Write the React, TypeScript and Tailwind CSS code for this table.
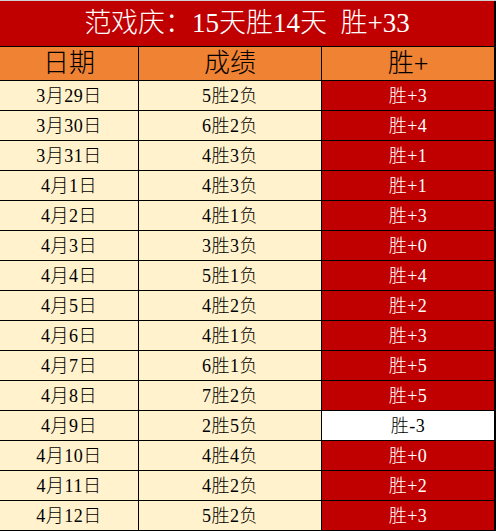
import React from 'react'

type Row = { date: string; record: string; net: string; lost?: boolean }

const rows: Row[] = [
  { date: '3月29日', record: '5胜2负', net: '胜+3' },
  { date: '3月30日', record: '6胜2负', net: '胜+4' },
  { date: '3月31日', record: '4胜3负', net: '胜+1' },
  { date: '4月1日', record: '4胜3负', net: '胜+1' },
  { date: '4月2日', record: '4胜1负', net: '胜+3' },
  { date: '4月3日', record: '3胜3负', net: '胜+0' },
  { date: '4月4日', record: '5胜1负', net: '胜+4' },
  { date: '4月5日', record: '4胜2负', net: '胜+2' },
  { date: '4月6日', record: '4胜1负', net: '胜+3' },
  { date: '4月7日', record: '6胜1负', net: '胜+5' },
  { date: '4月8日', record: '7胜2负', net: '胜+5' },
  { date: '4月9日', record: '2胜5负', net: '胜-3', lost: true },
  { date: '4月10日', record: '4胜4负', net: '胜+0' },
  { date: '4月11日', record: '4胜2负', net: '胜+2' },
  { date: '4月12日', record: '5胜2负', net: '胜+3' },
]

const font = "font-['Liberation_Serif','Noto_Sans_CJK_SC',serif]"

export default function App() {
  return (
    <div className={`w-[496px] h-[531px] bg-white ${font} font-light overflow-hidden`}>
      {/* title */}
      <div className="border-t border-[#d0d0d0]">
        <div className="h-[46px] bg-[#c00000] border-b border-r-2 border-black flex items-center justify-center text-white text-[27px] whitespace-pre">
          范戏庆：15天胜14天  胜+33
        </div>
      </div>

      {/* header */}
      <div className="flex h-[34px] bg-[#ef8233] border-b border-black text-[26px] text-black leading-none">
        <div className="w-[139px] border-r border-black flex items-center justify-center">日期</div>
        <div className="w-[183px] border-r border-black flex items-center justify-center">成绩</div>
        <div className="w-[174px] border-r-2 border-black flex items-center justify-center">胜+</div>
      </div>

      {/* rows */}
      {rows.map((r) => (
        <div key={r.date} className="flex h-[30px] border-b border-black text-[18px] tracking-[0.5px] leading-none">
          <div className="w-[139px] bg-[#fff2cc] border-r border-black flex items-center justify-center text-black pt-[1px]">
            {r.date}
          </div>
          <div className="w-[183px] bg-[#fff2cc] border-r border-black flex items-center justify-center text-black pt-[1px]">
            {r.record}
          </div>
          <div
            className={`w-[174px] border-r-2 border-black flex items-center justify-center pt-[1px] ${
              r.lost ? 'bg-white text-black' : 'bg-[#c00000] text-white'
            }`}
          >
            {r.net}
          </div>
        </div>
      ))}
    </div>
  )
}
